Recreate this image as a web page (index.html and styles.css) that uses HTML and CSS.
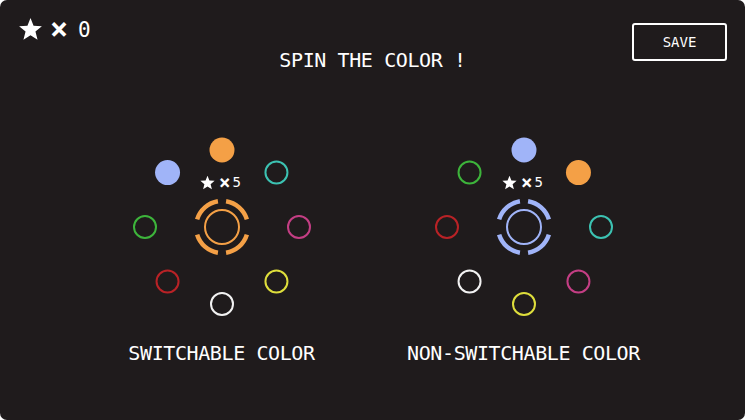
FILE: index.html
```html
<!DOCTYPE html>
<html>
<head>
<meta charset="utf-8">
<link rel="stylesheet" href="styles.css">
</head>
<body>
<div class="app">
  <header class="top">
    <div class="score">
      <svg class="star-lg" viewBox="0 0 24 24"><polygon points="12,1 15.06,8.79 23.41,9.29 16.95,14.61 19.05,22.71 12,18.2 4.95,22.71 7.05,14.61 0.59,9.29 8.94,8.79" fill="#fff"/></svg>
      <span class="times-lg">×</span>
      <span class="score-text">0</span>
    </div>
    <h1 class="title">SPIN THE COLOR !</h1>
    <button class="save">SAVE</button>
  </header>
  <main class="wheels">
    <section class="panel">
      <div class="canvas">
        <svg class="wheel" viewBox="0 0 180 180" width="180" height="180">
          <circle cx="90" cy="13" r="12.5" fill="#f4a046"/>
          <circle cx="144.45" cy="35.55" r="11" fill="none" stroke="#3cc2b2" stroke-width="2"/>
          <circle cx="167" cy="90" r="11" fill="none" stroke="#c43e84" stroke-width="2"/>
          <circle cx="144.45" cy="144.45" r="11" fill="none" stroke="#dede3c" stroke-width="2"/>
          <circle cx="90" cy="167" r="11" fill="none" stroke="#f2f2f2" stroke-width="2"/>
          <circle cx="35.55" cy="144.45" r="11" fill="none" stroke="#b92226" stroke-width="2"/>
          <circle cx="13" cy="90" r="11" fill="none" stroke="#3db43b" stroke-width="2"/>
          <circle cx="35.55" cy="35.55" r="12.5" fill="#a0b4f8"/>
          <g fill="none" stroke="#f4a046" stroke-width="4.5">
            <path d="M94.07 64.32 A26 26 0 0 1 114.86 82.40"/>
            <path d="M114.86 97.60 A26 26 0 0 1 94.07 115.68"/>
            <path d="M85.93 115.68 A26 26 0 0 1 65.14 97.60"/>
            <path d="M65.14 82.40 A26 26 0 0 1 85.93 64.32"/>
          </g>
          <circle cx="90" cy="90" r="17" fill="none" stroke="#f4a046" stroke-width="2"/>
        </svg>
        <div class="badge">
          <svg class="star-sm" viewBox="0 0 24 24"><polygon points="12,1 15.06,8.79 23.41,9.29 16.95,14.61 19.05,22.71 12,18.2 4.95,22.71 7.05,14.61 0.59,9.29 8.94,8.79" fill="#fff"/></svg>
          <span class="times-sm">×</span>
          <span class="badge-text">5</span>
        </div>
      </div>
      <h2 class="label">SWITCHABLE COLOR</h2>
    </section>
    <section class="panel">
      <div class="canvas">
        <svg class="wheel" viewBox="0 0 180 180" width="180" height="180">
          <circle cx="90" cy="13" r="12.5" fill="#a0b4f8"/>
          <circle cx="144.45" cy="35.55" r="12.5" fill="#f4a046"/>
          <circle cx="167" cy="90" r="11" fill="none" stroke="#3cc2b2" stroke-width="2"/>
          <circle cx="144.45" cy="144.45" r="11" fill="none" stroke="#c43e84" stroke-width="2"/>
          <circle cx="90" cy="167" r="11" fill="none" stroke="#dede3c" stroke-width="2"/>
          <circle cx="35.55" cy="144.45" r="11" fill="none" stroke="#f2f2f2" stroke-width="2"/>
          <circle cx="13" cy="90" r="11" fill="none" stroke="#b92226" stroke-width="2"/>
          <circle cx="35.55" cy="35.55" r="11" fill="none" stroke="#3db43b" stroke-width="2"/>
          <g fill="none" stroke="#a0b4f8" stroke-width="4.5">
            <path d="M94.07 64.32 A26 26 0 0 1 114.86 82.40"/>
            <path d="M114.86 97.60 A26 26 0 0 1 94.07 115.68"/>
            <path d="M85.93 115.68 A26 26 0 0 1 65.14 97.60"/>
            <path d="M65.14 82.40 A26 26 0 0 1 85.93 64.32"/>
          </g>
          <circle cx="90" cy="90" r="17" fill="none" stroke="#a0b4f8" stroke-width="2"/>
        </svg>
        <div class="badge">
          <svg class="star-sm" viewBox="0 0 24 24"><polygon points="12,1 15.06,8.79 23.41,9.29 16.95,14.61 19.05,22.71 12,18.2 4.95,22.71 7.05,14.61 0.59,9.29 8.94,8.79" fill="#fff"/></svg>
          <span class="times-sm">×</span>
          <span class="badge-text">5</span>
        </div>
      </div>
      <h2 class="label">NON-SWITCHABLE COLOR</h2>
    </section>
  </main>
</div>
</body>
</html>
```

FILE: styles.css
```css
* { box-sizing: border-box; }
html, body {
  margin: 0;
  padding: 0;
  background: #ffffff;
}
body {
  width: 745px;
  height: 420px;
  overflow: hidden;
  font-family: "DejaVu Sans Mono", "Liberation Mono", monospace;
  color: #ffffff;
}
.app {
  width: 745px;
  height: 420px;
  background: #1f1b1c;
  border-radius: 7px;
  overflow: hidden;
}
.top {
  display: grid;
  grid-template-columns: 1fr auto 1fr;
  align-items: start;
  padding: 17px 18px 0 18px;
}
.score {
  display: flex;
  align-items: center;
  height: 24px;
}
.star-lg {
  width: 25px;
  height: 24px;
  display: block;
}
.times-lg {
  font-size: 30px;
  line-height: 24px;
  margin-left: 7px;
  font-weight: bold;
}
.score-text {
  font-size: 21px;
  line-height: 22px;
  margin-left: 10px;
  margin-top: 2px;
}
.title {
  margin: 33px 0 0 0;
  font-size: 20px;
  line-height: 20px;
  font-weight: normal;
  letter-spacing: -0.4px;
  white-space: nowrap;
}
.save {
  justify-self: end;
  margin-top: 6px;
  width: 95px;
  height: 38px;
  background: transparent;
  border: 2px solid #ffffff;
  border-radius: 3px;
  color: #ffffff;
  font-family: "DejaVu Sans Mono", "Liberation Mono", monospace;
  font-size: 14px;
  padding: 0;
}
.wheels {
  display: flex;
  justify-content: center;
  gap: 62px;
  margin-top: 67px;
}
.panel {
  width: 240px;
  display: flex;
  flex-direction: column;
  align-items: center;
}
.canvas {
  position: relative;
  width: 180px;
  height: 180px;
}
.wheel {
  display: block;
}
.badge {
  position: absolute;
  left: 0;
  right: 0;
  top: 37px;
  display: flex;
  justify-content: center;
  align-items: center;
  padding-right: 2px;
}
.star-sm {
  width: 15px;
  height: 15px;
  display: block;
}
.times-sm {
  font-size: 19px;
  line-height: 16px;
  margin-left: 4px;
  font-weight: bold;
}
.badge-text {
  font-size: 14px;
  line-height: 16px;
  margin-left: 2px;
}
.label {
  margin: 26px 0 0 0;
  font-size: 20px;
  line-height: 20px;
  font-weight: normal;
  letter-spacing: -0.4px;
  white-space: nowrap;
}
```
